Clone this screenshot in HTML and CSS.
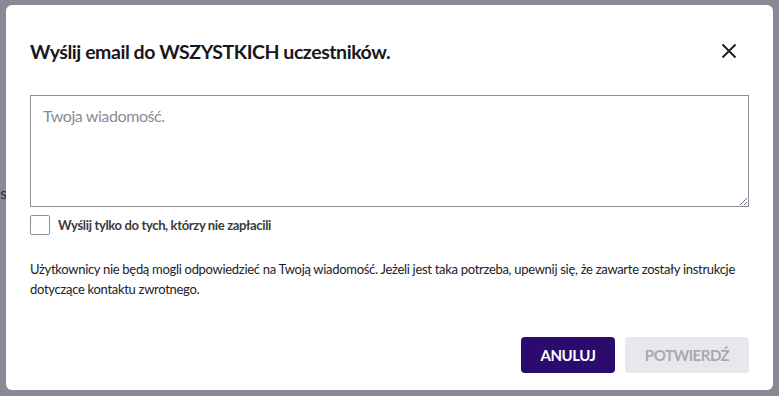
FILE: index.html
```html
<!DOCTYPE html>
<html lang="pl">

<head>
    <meta charset="UTF-8">
    <meta name="viewport" content="width=device-width, initial-scale=1.0">
    <title>Wyślij email</title>
    <link rel="stylesheet" href="styles.css">
</head>

<body>
    <div class="backdrop">
        <span class="behind">s</span>
        <div class="modal">
            <div class="modal-header">
                <h1>Wyślij email do WSZYSTKICH uczestników.</h1>
                <button type="button" class="close" aria-label="Zamknij">
                    <svg width="16" height="16" viewBox="0 0 16 16">
                        <path d="M1.5 1.5 L14.5 14.5 M14.5 1.5 L1.5 14.5" stroke="#1a1a1a" stroke-width="1.8" fill="none" />
                    </svg>
                </button>
            </div>

            <textarea class="message" placeholder="Twoja wiadomość."></textarea>

            <label class="check">
                <input type="checkbox">
                <span class="box"></span>
                <span>Wyślij tylko do tych, którzy nie zapłacili</span>
            </label>

            <p class="note">Użytkownicy nie będą mogli odpowiedzieć na Twoją wiadomość. Jeżeli jest taka potrzeba, upewnij się, że zawarte zostały instrukcje dotyczące kontaktu zwrotnego.</p>

            <div class="actions">
                <button type="button" class="btn btn-primary">ANULUJ</button>
                <button type="button" class="btn btn-disabled" disabled>POTWIERDŹ</button>
            </div>
        </div>
    </div>
</body>

</html>
```
FILE: styles.css
```css
* {
    box-sizing: border-box;
}

body {
    margin: 0;
    font-family: Lato, "Noto Sans", sans-serif;
    color: #1d1d22;
}

.backdrop {
    height: 396px;
    background-color: #888b95;
    padding: 5px 6px 6px 6px;
    position: relative;
}

.behind {
    position: absolute;
    left: 0;
    top: 183px;
    font-size: 16px;
    color: #2b2b30;
    width: 6px;
    overflow: hidden;
}

.modal {
    position: relative;
    height: 100%;
    background: #fff;
    border-radius: 6px;
    padding: 31px 24px 17px 24px;
    display: flex;
    flex-direction: column;
}

.modal-header {
    display: flex;
    justify-content: space-between;
    align-items: center;
    height: 30px;
}

.modal-header h1 {
    margin: 0;
    font-size: 19.5px;
    letter-spacing: -0.45px;
    font-weight: 700;
    color: #17171c;
}

.close {
    border: none;
    background: none;
    padding: 0;
    margin-right: 12px;
    width: 16px;
    height: 16px;
    display: flex;
}

.message {
    margin-top: 29px;
    height: 112px;
    width: 100%;
    border: 1px solid #8b8d9b;
    border-radius: 0;
    padding: 10px 12px;
    font-family: inherit;
    font-size: 16px;
    letter-spacing: -0.4px;
    resize: vertical;
}

.message::placeholder {
    color: #8a8b94;
}

.check {
    margin-top: 8px;
    display: flex;
    align-items: center;
    gap: 8px;
    font-size: 13px;
    letter-spacing: -0.35px;
    font-weight: 700;
    color: #3a3a40;
}

.check input {
    display: none;
}

.check .box {
    width: 20px;
    height: 20px;
    border: 1px solid #8b8d9b;
    border-radius: 2px;
}

.note {
    margin: 24px 0 0 0;
    font-size: 13px;
    letter-spacing: -0.3px;
    line-height: 20px;
    color: #222226;
}

.actions {
    margin-top: auto;
    display: flex;
    justify-content: flex-end;
    gap: 10px;
}

.btn {
    height: 36px;
    border: none;
    border-radius: 4px;
    font-family: inherit;
    font-size: 15px;
    letter-spacing: -0.5px;
    font-weight: 700;
    padding: 0;
}

.btn-primary {
    width: 94px;
    background-color: #2b0b6e;
    color: #fff;
}

.btn-disabled {
    width: 124px;
    background-color: #e8e8ec;
    color: #a8a8b0;
}
```
